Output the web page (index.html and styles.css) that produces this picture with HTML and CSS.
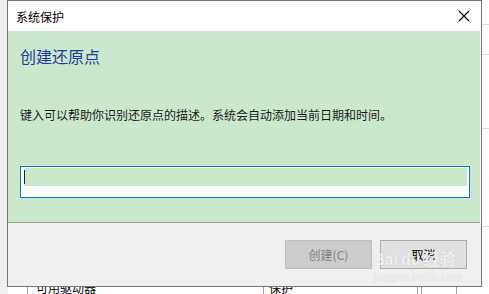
FILE: index.html
```html
<!DOCTYPE html>
<html>
<head>
  <title>系统保护</title>
  <meta name="viewport" content="width=device-width, initial-scale=1.0" />
  <link rel="stylesheet" href="styles.css">
</head>
<body>
  <div class="desktop">
    <!-- window behind the dialog -->
    <div class="behind">
      <div class="behind-strip"></div>
      <div class="behind-main">
        <div class="behind-lines">
          <div class="hline l1"></div>
          <div class="hline l2"></div>
          <div class="hline l3"></div>
          <div class="hline l4"></div>
        </div>
        <div class="behind-row">
          <div class="cell c0"></div>
          <div class="cell c1">可用驱动器</div>
          <div class="cell c2">保护</div>
          <div class="cell c3"></div>
          <div class="cell c4"></div>
        </div>
      </div>
    </div>

    <!-- dialog -->
    <div class="dialog">
      <div class="titlebar">
        <span class="title">系统保护</span>
        <svg class="close" width="12" height="12" viewBox="0 0 12 12">
          <path d="M1 1 L11 11 M11 1 L1 11" stroke="#000" stroke-width="1.1" fill="none" />
        </svg>
      </div>
      <div class="content">
        <h1 class="heading">创建还原点</h1>
        <p class="desc">键入可以帮助你识别还原点的描述。系统会自动添加当前日期和时间。</p>
        <div class="field">
          <div class="field-fill"><span class="caret"></span></div>
        </div>
      </div>
      <div class="footer">
        <button class="btn" disabled>创建(C)</button>
        <button class="btn cancel">取消</button>
      </div>
    </div>

    <div class="watermark">
      <div class="wm-logo">Bai<span class="wm-du">du</span>经验</div>
      <div class="wm-url">jingyan.baidu.com</div>
    </div>
  </div>
</body>
</html>
```

FILE: styles.css
```css
body {
  margin: 0;
  font-family: "Noto Sans CJK SC", "Liberation Sans", sans-serif;
  background-color: #fff;
  overflow: hidden;
}
.desktop {
  position: relative;
  width: 489px;
  height: 294px;
}
.behind {
  display: flex;
  height: 294px;
}
.behind-strip {
  width: 8px;
  background-color: #f0f0f0;
}
.behind-main {
  flex: 1;
  display: flex;
  flex-direction: column;
}
.behind-lines {
  flex: 1;
  display: flex;
  flex-direction: column;
  padding-top: 24px;
}
.hline {
  height: 1px;
  background-color: #dcdcdc;
  margin-left: 470px;
}
.l2 { margin-top: 29px; }
.l3 { margin-top: 73px; }
.l4 { margin-top: 97px; }
.behind-row {
  display: flex;
  height: 12px;
  font-size: 12px;
  line-height: 12px;
  color: #000;
}
.cell {
  border-left: 1px solid #a0a0a0;
  padding-left: 8px;
  overflow: hidden;
}
.c0 { width: 19px; border-left: none; padding-left: 0; }
.c1 { width: 227px; }
.c2 { width: 148px; padding-left: 5px; }
.c3 { width: 1px; padding-left: 2px; }
.c4 { width: 26px; border-right: 1px solid #a0a0a0; }

.dialog {
  position: absolute;
  left: 7px;
  top: 0;
  width: 473px;
  height: 285px;
  border: 1px solid #767676;
  background-color: #fff;
  display: flex;
  flex-direction: column;
}
.titlebar {
  height: 30px;
  display: flex;
  align-items: center;
  justify-content: space-between;
  padding: 0 11px 0 8px;
}
.title {
  font-size: 12px;
  color: #000;
}
.close {
  display: block;
}
.content {
  height: 191px;
  background-color: #cbe8cd;
  margin-right: 1px;
  padding: 0 12px;
  border-bottom: 1px solid #a0a0a0;
}
.heading {
  margin: 14px 0 0;
  font-size: 16px;
  font-weight: normal;
  line-height: 22px;
  color: #1c3c9c;
}
.desc {
  margin: 40px 0 0;
  font-size: 12px;
  line-height: 16px;
  color: #1a1a1a;
}
.field {
  margin-top: 43px;
  width: 443px;
  height: 29px;
  border: 1px solid #0078d7;
  background-color: #fff;
  padding: 1px 2px 0 3px;
}
.field-fill {
  height: 18px;
  background-color: #cbe8cd;
  position: relative;
}
.caret {
  position: absolute;
  left: 0;
  top: 2px;
  width: 1px;
  height: 14px;
  background-color: #2a1a2a;
}
.footer {
  flex: 1;
  background-color: #f0f0f0;
  display: flex;
  justify-content: flex-end;
  gap: 8px;
  padding: 17px 14px 0 0;
}
.btn {
  width: 87px;
  height: 29px;
  font-family: inherit;
  font-size: 12px;
  border: 1px solid #bfbfbf;
  background-color: #cccccc;
  color: #838383;
  padding: 0;
}
.btn.cancel {
  border-color: #adadad;
  background-color: #e1e1e1;
  color: #000;
}

.watermark {
  position: absolute;
  left: 373px;
  top: 251px;
  color: rgba(255, 255, 255, 0.75);
  text-shadow: 0 0 1px rgba(170, 170, 170, 0.6);
  pointer-events: none;
}
.wm-logo {
  font-family: "Liberation Sans", "Noto Sans CJK SC", sans-serif;
  font-size: 16px;
  font-weight: bold;
  line-height: 18px;
}
.wm-du {
  margin: 0 3px;
}
.wm-url {
  font-family: "Liberation Serif", serif;
  font-size: 12px;
  line-height: 14px;
}
```
